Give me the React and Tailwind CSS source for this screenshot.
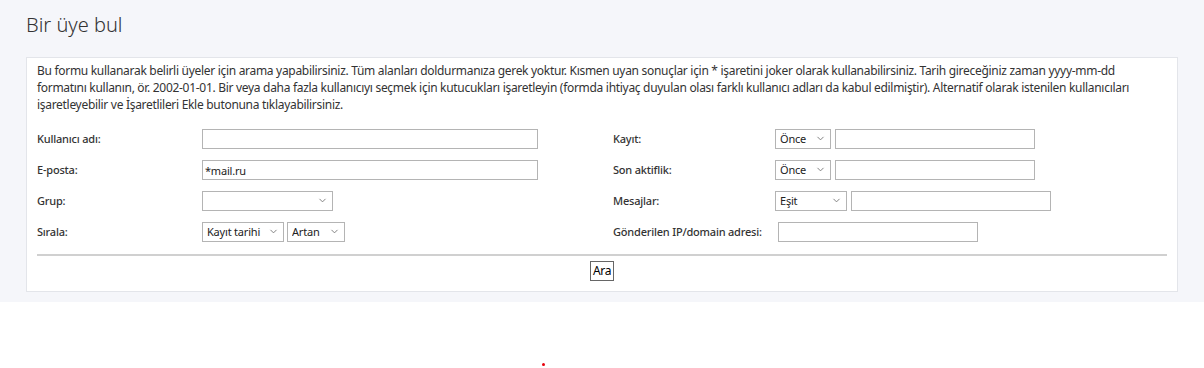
import { ChevronDown } from "lucide-react";

const font = { fontFamily: '"Noto Sans", "Open Sans", sans-serif' };

function Select({ value, width }) {
  return (
    <div className={`relative h-[20px] ${width}`}>
      <select
        defaultValue={value}
        className="block h-full w-full appearance-none border border-[#b4b4b4] bg-white py-0 pl-[4px] pr-[18px] text-[11px] leading-[18px] tracking-[-0.2px] text-[#222] outline-none"
      >
        <option>{value}</option>
      </select>
      <ChevronDown
        size={11}
        strokeWidth={2}
        className="pointer-events-none absolute right-[5px] top-[4px] text-[#777]"
      />
    </div>
  );
}

function Input({ value = "", width }) {
  return (
    <input
      defaultValue={value}
      className={`block h-[20px] ${width} border border-[#b4b4b4] bg-white px-[2px] text-[11px] tracking-[-0.2px] text-[#222] outline-none`}
    />
  );
}

function Label({ children }) {
  return (
    <div className="text-[11px] font-medium leading-[16px] tracking-[-0.2px] text-[#333]">{children}</div>
  );
}

export default function App() {
  return (
    <div style={font} className="h-[368px] overflow-hidden bg-white">
      <div className="bg-[#f5f6fa] px-[26px] pb-[10px] pt-[11px]">
        <h2 className="mb-[18px] text-[20px] font-light leading-[28px] text-[#333]">Bir üye bul</h2>
        <div className="border border-[#e3e5ea] bg-white px-[10px] pb-[10px] pt-[4px]">
          <p className="whitespace-nowrap text-[12px] leading-[17px] tracking-[-0.3px] text-[#333]">
            Bu formu kullanarak belirli üyeler için arama yapabilirsiniz. Tüm alanları doldurmanıza gerek yoktur. Kısmen uyan sonuçlar için * işaretini joker olarak kullanabilirsiniz. Tarih gireceğiniz zaman yyyy-mm-dd
            <br />
            formatını kullanın, ör. 2002-01-01. Bir veya daha fazla kullanıcıyı seçmek için kutucukları işaretleyin (formda ihtiyaç duyulan olası farklı kullanıcı adları da kabul edilmiştir). Alternatif olarak istenilen kullanıcıları
            <br />
            işaretleyebilir ve İşaretlileri Ekle butonuna tıklayabilirsiniz.
          </p>

          <div className="mt-[16px] grid auto-rows-[20px] grid-cols-[165px_411px_162px_1fr] items-center gap-y-[11px]">
            <Label>Kullanıcı adı:</Label>
            <Input width="w-[336px]" />
            <Label>Kayıt:</Label>
            <div className="flex gap-[4px]">
              <Select value="Önce" width="w-[56px]" />
              <Input width="w-[200px]" />
            </div>

            <Label>E-posta:</Label>
            <Input value="*mail.ru" width="w-[336px]" />
            <Label>Son aktiflik:</Label>
            <div className="flex gap-[4px]">
              <Select value="Önce" width="w-[56px]" />
              <Input width="w-[200px]" />
            </div>

            <Label>Grup:</Label>
            <Select value="" width="w-[131px]" />
            <Label>Mesajlar:</Label>
            <div className="flex gap-[4px]">
              <Select value="Eşit" width="w-[72px]" />
              <Input width="w-[200px]" />
            </div>

            <Label>Sırala:</Label>
            <div className="flex gap-[3px]">
              <Select value="Kayıt tarihi" width="w-[82px]" />
              <Select value="Artan" width="w-[58px]" />
            </div>
            <Label>Gönderilen IP/domain adresi:</Label>
            <div className="pl-[3px]">
              <Input width="w-[200px]" />
            </div>
          </div>

          <div className="mt-[12px] border-t-2 border-[#d0d0d0] pt-[5px]">
            <div className="flex justify-center">
              <button className="h-[20px] border border-[#666] bg-white px-[2px] text-[12px] leading-none tracking-[-0.3px] text-black">
                Ara
              </button>
            </div>
          </div>
        </div>
      </div>
      <div className="ml-[542px] mt-[61px] h-[3px] w-[3px] rounded-full bg-red-600" />
    </div>
  );
}
